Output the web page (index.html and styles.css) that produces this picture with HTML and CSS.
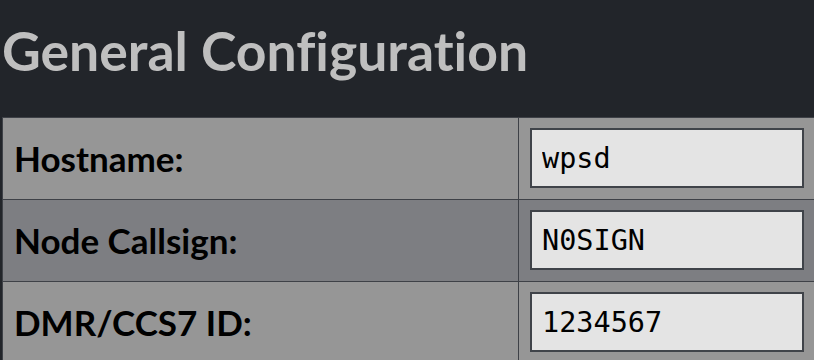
FILE: index.html
```html
<!DOCTYPE html>
<html>
<head>
    <title>General Configuration</title>
    <link rel="stylesheet" href="styles.css">
</head>
<body>
    <div class="page">
        <h1>General Configuration</h1>
        <table class="config">
            <colgroup>
                <col class="label-col">
                <col class="field-col">
            </colgroup>
            <tr class="odd">
                <td class="label">Hostname:</td>
                <td class="field"><input type="text" value="wpsd"><span class="hint">Do not add suffixes such as .local</span></td>
            </tr>
            <tr class="even">
                <td class="label">Node Callsign:</td>
                <td class="field"><input type="text" value="N0SIGN"><span class="hint">Personal or club callsign</span></td>
            </tr>
            <tr class="odd">
                <td class="label">DMR/CCS7 ID:</td>
                <td class="field"><input type="text" value="1234567"></td>
            </tr>
        </table>
    </div>
</body>
</html>
```

FILE: styles.css
```css
html, body {
    margin: 0;
    overflow: hidden;
    background-color: #22252a;
}

.page {
    padding-left: 2px;
}

h1 {
    font-family: Lato, sans-serif;
    font-weight: 700;
    font-size: 53.5px;
    font-variant-ligatures: none;
    line-height: 62px;
    margin: 19px 0 36px 0;
    color: #bfbfbf;
}

.config {
    table-layout: fixed;
    width: 1200px;
    border-collapse: collapse;
    border: 1px solid #3e4147;
    font-family: Lato, sans-serif;
}

.label-col {
    width: 516px;
}

.config td {
    border: 1px solid #3e4147;
    padding: 10px 10px 11px 11px;
    vertical-align: middle;
    white-space: nowrap;
    overflow: hidden;
}

.odd td {
    background-color: #969696;
}

.even td {
    background-color: #7d7e82;
}

.label {
    font-weight: 700;
    font-size: 35px;
    color: #000;
}

.field input {
    box-sizing: border-box;
    width: 274px;
    height: 60px;
    padding: 0 10px;
    border: 2px solid #3f4349;
    border-radius: 0;
    background-color: #e4e4e4;
    font-family: "DejaVu Sans Mono", monospace;
    font-size: 28.5px;
    color: #000;
    vertical-align: middle;
}

.hint {
    margin-left: 9px;
    font-size: 35px;
    color: #000;
    vertical-align: middle;
}
```
